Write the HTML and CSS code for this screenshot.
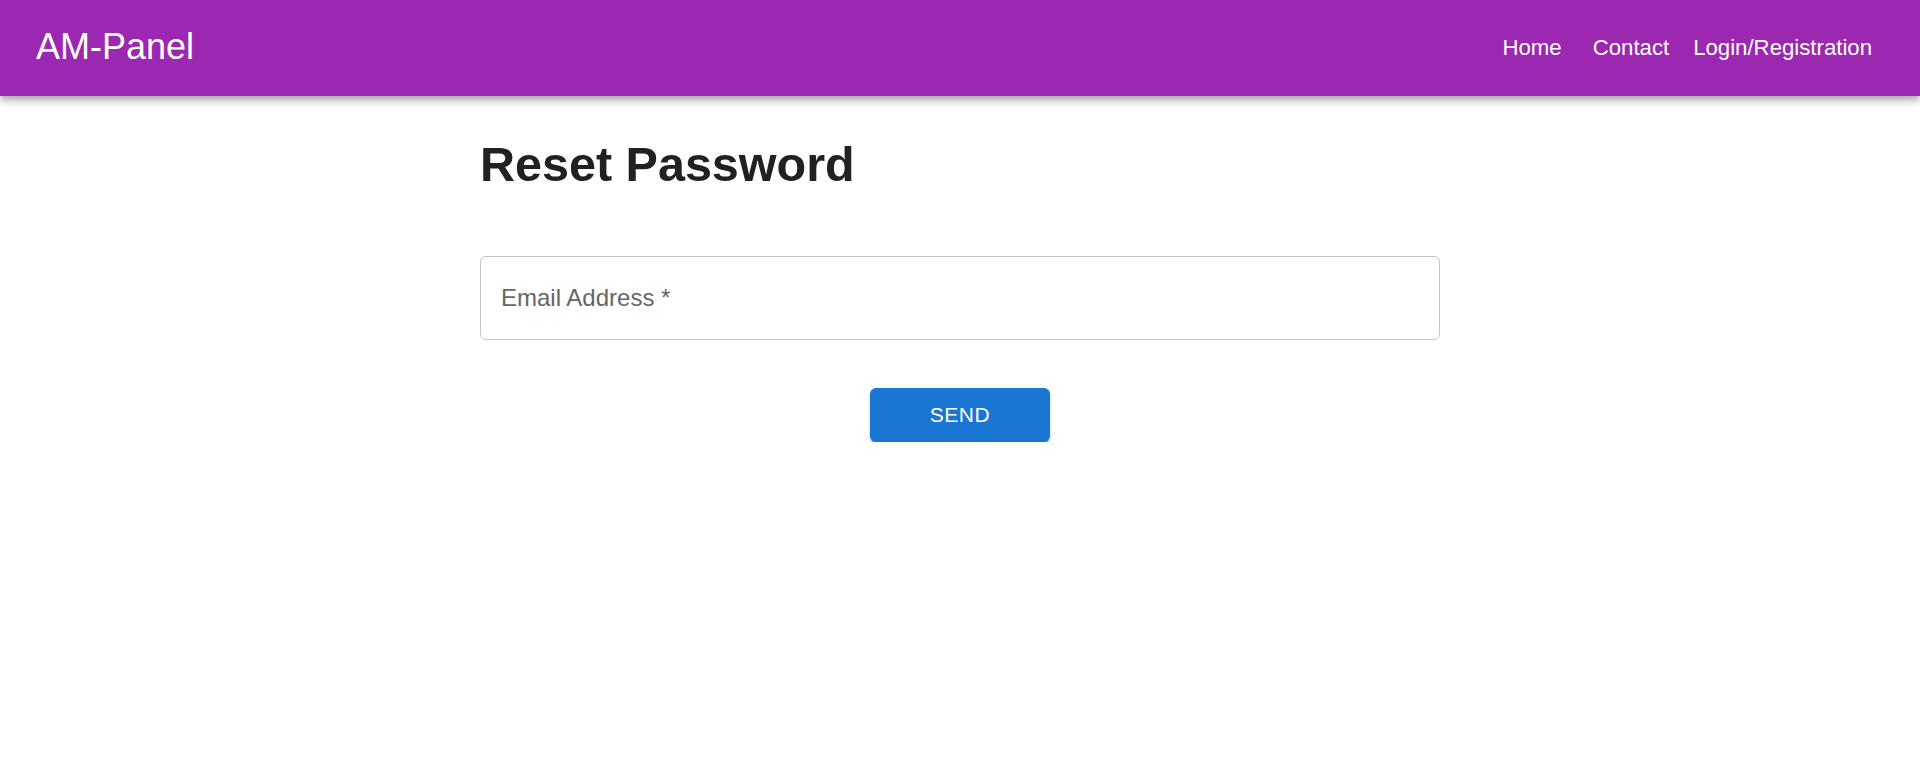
FILE: index.html
```html
<!DOCTYPE html>
<html lang="en">
<head>
<meta charset="utf-8">
<title>AM-Panel - Reset Password</title>
<link rel="stylesheet" href="styles.css">
</head>
<body>
<header class="appbar">
  <div class="brand">AM-Panel</div>
  <nav class="nav">
    <a class="nav-link nav-home" href="#">Home</a>
    <a class="nav-link" href="#">Contact</a>
    <a class="nav-link" href="#">Login/Registration</a>
  </nav>
</header>
<main class="container">
  <h1 class="title">Reset Password</h1>
  <form class="form">
    <div class="field">
      <span class="field-label">Email Address *</span>
    </div>
    <div class="actions">
      <button type="button" class="btn">SEND</button>
    </div>
  </form>
</main>
</body>
</html>
```

FILE: styles.css
```css
html, body {
  margin: 0;
  padding: 0;
  background: #ffffff;
  font-family: "Liberation Sans", Arial, sans-serif;
}

.appbar {
  height: 96px;
  background: #9c27b0;
  color: #ffffff;
  display: flex;
  align-items: center;
  justify-content: space-between;
  padding: 0 36px;
  box-sizing: border-box;
  box-shadow: 0px 3px 6px -1px rgba(0,0,0,0.2), 0px 6px 7px 0px rgba(0,0,0,0.14), 0px 1px 15px 0px rgba(0,0,0,0.12);
  position: relative;
  z-index: 1;
}

.brand {
  font-size: 36px;
  line-height: 1;
  margin-top: -2px;
}

.nav {
  display: flex;
  align-items: center;
}

.nav-link {
  color: #ffffff;
  text-decoration: none;
  font-size: 22.2px;
  padding: 9px 12px;
  line-height: 1.2;
}

.nav-home {
  margin-right: 7px;
}

.container {
  width: 960px;
  margin: 0 auto;
  padding-top: 39px;
}

.title {
  margin: 0;
  font-size: 48.5px;
  font-weight: 700;
  line-height: 1.2;
  color: #212121;
}

.form {
  margin-top: 63px;
}

.field {
  height: 84px;
  box-sizing: border-box;
  border: 1px solid #c4c4c4;
  border-radius: 6px;
  display: flex;
  align-items: center;
  padding: 0 20px;
}

.field-label {
  font-size: 24px;
  color: #666666;
  margin-top: -1px;
}

.actions {
  display: flex;
  justify-content: center;
  margin-top: 48px;
}

.btn {
  width: 180px;
  height: 54px;
  border: none;
  border-radius: 6px;
  background: #1976d2;
  color: #ffffff;
  font-family: "Liberation Sans", Arial, sans-serif;
  font-size: 21px;
  letter-spacing: 0.6px;
  box-shadow: 0px 3px 1px -2px rgba(0,0,0,0.2), 0px 2px 2px 0px rgba(0,0,0,0.14), 0px 1px 5px 0px rgba(0,0,0,0.12);
  cursor: pointer;
}
```
